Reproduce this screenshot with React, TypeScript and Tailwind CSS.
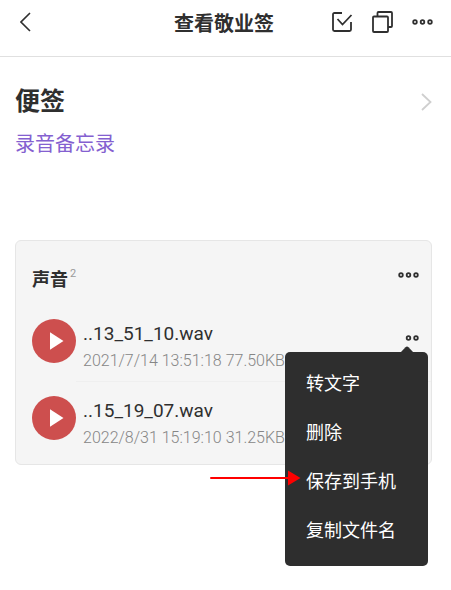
type Recording = {
  name: string;
  date: string;
  size: string;
  menuOpen?: boolean;
};

const recordings: Recording[] = [
  { name: "..13_51_10.wav", date: "2021/7/14 13:51:18", size: "77.50KB", menuOpen: true },
  { name: "..15_19_07.wav", date: "2022/8/31 15:19:10", size: "31.25KB" },
];

const menuItems = [
  { label: "转文字" },
  { label: "删除" },
  { label: "保存到手机", pointed: true },
  { label: "复制文件名" },
];

function Dots({ count = 3 }: { count?: number }) {
  const centers = [3, 10.5, 18].slice(3 - count);
  return (
    <svg width="21" height="6" viewBox="0 0 21 6" fill="none" stroke="currentColor" strokeWidth="1.8">
      {centers.map((cx) => (
        <circle key={cx} cx={cx} cy="3" r="1.8" />
      ))}
    </svg>
  );
}

function Header() {
  return (
    <header className="grid h-[57px] grid-cols-[1fr_auto_1fr] items-center border-b border-[#e0e0e0] pt-1 pr-[18px] pb-4 pl-[15px]">
      <button aria-label="返回" className="justify-self-start px-[5px]">
        <svg width="11" height="20" viewBox="0 0 11 20" fill="none" stroke="currentColor" strokeWidth="1.6">
          <path d="M10 1 1 10l9 9" />
        </svg>
      </button>
      <h1 className="pt-1 text-[20px] leading-7 font-bold">查看敬业签</h1>
      <div className="flex items-center gap-[19px] justify-self-end">
        <button aria-label="完成">
          <svg width="21" height="22" viewBox="0 0 21 22" fill="none" stroke="currentColor" strokeWidth="1.8">
            <path d="M10 2H2.5Q1 2 1 3.5v15Q1 20 2.5 20h15q1.500 0 1.500-1.500V11" />
            <path d="m5.500 8 5 5.500L19.500 4" />
          </svg>
        </button>
        <button aria-label="复制">
          <svg width="21" height="22" viewBox="0 0 21 22" fill="none" stroke="currentColor" strokeWidth="1.8">
            <rect x="1" y="5.500" width="15" height="15.500" rx="1" />
            <path d="M5.500 5.500V2q0-1 1-1H19q1 0 1 1v13q0 1-1 1h-3" />
          </svg>
        </button>
        <button aria-label="更多">
          <Dots />
        </button>
      </div>
    </header>
  );
}

function Menu() {
  return (
    <div className="absolute top-[17px] -right-[9px] z-10 w-[143px] rounded-[5px] bg-[#2e2e2e] pt-[7px] pb-[11px] text-white">
      <svg className="absolute -top-[6px] right-[14px]" width="14" height="7" viewBox="0 0 14 7" fill="#2e2e2e">
        <path d="M0 7 5.500 1.200Q7-.3 8.500 1.200L14 7z" />
      </svg>
      {menuItems.map((item) => (
        <button
          key={item.label}
          className="relative flex h-[49px] w-full items-center pl-[21px] text-[18px] leading-6"
        >
          {item.pointed && (
            <svg className="absolute top-[12px] right-[127px]" width="91" height="18" viewBox="0 0 91 18" aria-hidden="true">
              <path d="M1 9h80" stroke="#f00" strokeWidth="2" strokeLinecap="round" />
              <path d="M78 1.500 90.500 9 78 16.500z" fill="#f00" />
            </svg>
          )}
          {item.label}
        </button>
      ))}
    </div>
  );
}

function RecordingRow({ name, date, size, menuOpen }: Recording) {
  return (
    <li className="group flex h-[77px] items-start">
      <button aria-label={`播放 ${name}`} className="mt-[14px] shrink-0">
        <svg width="44" height="44" viewBox="0 0 44 44">
          <circle cx="22" cy="22" r="22" fill="#cd4f4e" />
          <path d="M18 13.300v17.400L31.500 22z" fill="#fff" />
        </svg>
      </button>
      <div className="flex h-full min-w-0 flex-1 items-start border-b border-[#efefef] pl-[7px] group-last:border-0">
        <div className="mt-[15px] min-w-0 flex-1 whitespace-nowrap">
          <div className="text-[19px] leading-7">{name}</div>
          <div className="text-[16px] leading-[26px] font-light text-[#868686]">
            {date} {size}
          </div>
        </div>
        <div className="relative mt-[30px] mr-3">
          <button aria-label="更多操作" className="block">
            <Dots count={menuOpen ? 2 : 3} />
          </button>
          {menuOpen && <Menu />}
        </div>
      </div>
    </li>
  );
}

export default function App() {
  return (
    <div className="min-h-screen bg-white font-[Roboto,'Noto_Sans_CJK_SC',sans-serif] text-[#2f2f2f]">
      <Header />
      <main className="pt-[25px] pr-[19px] pb-32 pl-[15px]">
        <a href="#category" className="flex items-center justify-between">
          <h2 className="text-[25px] leading-10 font-bold">便签</h2>
          <svg width="11" height="18" viewBox="0 0 11 18" fill="none" stroke="#cfcfcf" strokeWidth="1.8">
            <path d="m1 1 8.500 8L1 17" />
          </svg>
        </a>
        <p className="mt-2 text-[20px] leading-7 text-[#8460d0]">录音备忘录</p>

        <section className="mt-[82px] rounded-md border border-[#e6e6e6] bg-[#f5f5f5] pb-[5px] pl-4">
          <div className="flex h-16 items-center justify-between pt-1 pr-3">
            <h3 className="mt-[10px] flex items-start gap-[2px] text-[18px] leading-6 font-bold">
              声音
              <sup className="top-0 text-[11px] leading-3 font-normal text-[#9a9a9a]">2</sup>
            </h3>
            <button aria-label="更多">
              <Dots />
            </button>
          </div>
          <ul>
            {recordings.map((rec) => (
              <RecordingRow key={rec.name} {...rec} />
            ))}
          </ul>
        </section>
      </main>
    </div>
  );
}
